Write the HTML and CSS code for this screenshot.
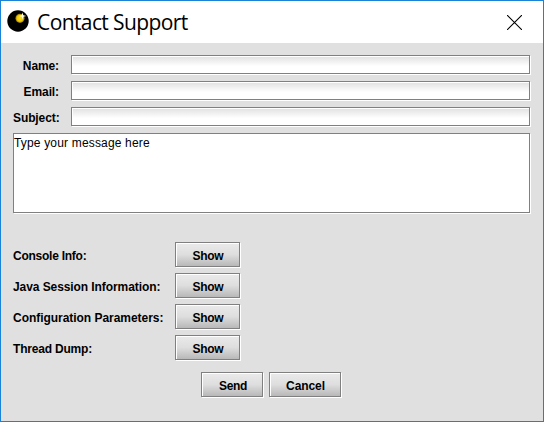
FILE: index.html
```html
<!DOCTYPE html>
<html lang="en">
<head>
<meta charset="utf-8">
<title>Contact Support</title>
<link rel="stylesheet" href="styles.css">
</head>
<body>
<div class="window">
  <header class="titlebar">
    <svg class="logo" width="22" height="22" viewBox="0 0 22 22">
      <defs><radialGradient id="sun"><stop offset="0" stop-color="#ffe40a"/><stop offset=".65" stop-color="#efc80c"/><stop offset="1" stop-color="#8a7000"/></radialGradient></defs>
      <circle cx="11" cy="11" r="10.7" fill="#000"/>
      <circle cx="13" cy="8.3" r="4.6" fill="url(#sun)"/>
      <path d="M15.5 2.6l.8 2.6 3 .8-3 .8-.8 2.8-.8-2.8-2.8-.8 2.8-.8z" fill="#fffbe0"/>
    </svg>
    <h1 class="title">Contact Support</h1>
    <svg class="close" width="15" height="15" viewBox="0 0 15 15"><path d="M0 0L15 15M15 0L0 15" stroke="#000" stroke-width="1.1"/></svg>
  </header>
  <main class="content">
    <div class="fields">
      <label for="name">Name:</label><input id="name" class="etched field">
      <label for="email">Email:</label><input id="email" class="etched field">
      <label for="subject">Subject:</label><input id="subject" class="etched field">
    </div>
    <textarea class="etched message" spellcheck="false">Type your message here</textarea>
    <div class="details">
      <span class="caption console">Console Info:</span><button class="etched button">Show</button>
      <span class="caption session">Java Session Information:</span><button class="etched button">Show</button>
      <span class="caption config">Configuration Parameters:</span><button class="etched button">Show</button>
      <span class="caption thread">Thread Dump:</span><button class="etched button">Show</button>
    </div>
    <div class="actions">
      <button class="etched button send">Send</button>
      <button class="etched button cancel">Cancel</button>
    </div>
  </main>
</div>
</body>
</html>
```
FILE: styles.css
```css
* { box-sizing: border-box; }
body { margin: 0; font: bold 12px/14px "Liberation Sans", Arial, sans-serif; color: #000; }
.window { width: 544px; height: 422px; border: 1px solid #1883d7; background: #e0e0e0; }
.titlebar { height: 42px; background: #fff; display: flex; align-items: center; padding: 0 21px 0 6px; }
.logo { flex: none; margin-bottom: 2px; }
.title { margin: 0 0 0 8px; font: 400 21px/28px "Open Sans", "Noto Sans", sans-serif; letter-spacing: -.6px; white-space: nowrap; }
.close { margin-left: auto; }
.content { padding: 12px 13px 0 12px; }
.etched {
  display: block;
  margin: 0;
  border: 1px solid #808080;
  border-radius: 0;
  box-shadow: 1px 1px 0 #fff, inset 1px 1px 0 #fff;
  outline: none;
}
.fields { display: grid; grid-template-columns: 47px 459px; column-gap: 11px; row-gap: 7px; align-items: center; }
.fields label { text-align: right; padding: 3px 1px 0 0; letter-spacing: -.1px; }
.field { width: 459px; height: 19px; padding: 0 2px; background: linear-gradient(#e0e0e0, #fff 60%); }
.message { width: 517px; height: 80px; margin-top: 7px; padding: 2px 0 0; resize: none; overflow: hidden; background: #fff; font: 400 12px/14px "Liberation Sans", Arial, sans-serif; letter-spacing: .17px; color: #000; }
.details { display: grid; grid-template-columns: 162px 65px; row-gap: 6px; align-items: center; margin-top: 29px; }
.caption { white-space: nowrap; padding-top: 2px; }
.console { letter-spacing: -.25px; }
.session { letter-spacing: -.08px; }
.config { letter-spacing: -.04px; }
.thread { letter-spacing: -.2px; }
.button { height: 25px; padding: 3px 0 0 1px; font: bold 12px/14px "Liberation Sans", Arial, sans-serif; letter-spacing: -.3px; color: #000; background: linear-gradient(#eaeaea, #dedede 50%, #b8b8b8); }
.actions { display: flex; gap: 6px; margin: 12px 0 0 188px; }
.send { width: 62px; padding-left: 2px; }
.cancel { width: 72px; letter-spacing: -.1px; }
```
